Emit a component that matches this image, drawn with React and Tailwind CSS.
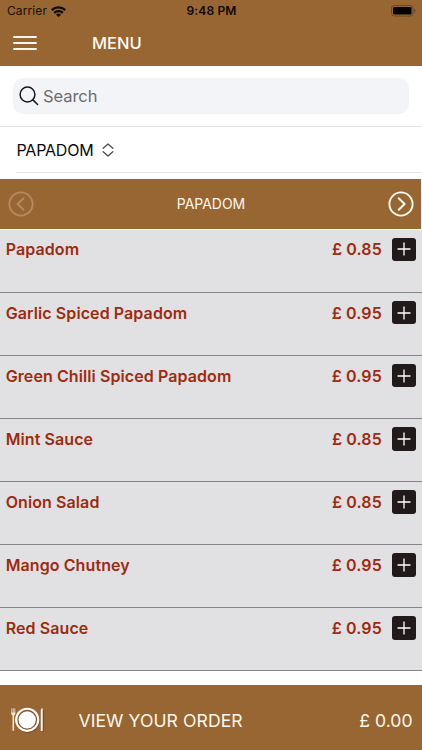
import React from 'react';

const menuItems = [
  { name: 'Papadom', price: '0.85' },
  { name: 'Garlic Spiced Papadom', price: '0.95' },
  { name: 'Green Chilli Spiced Papadom', price: '0.95' },
  { name: 'Mint Sauce', price: '0.85' },
  { name: 'Onion Salad', price: '0.85' },
  { name: 'Mango Chutney', price: '0.95' },
  { name: 'Red Sauce', price: '0.95' },
];

const WifiIcon = () => (
  <svg className="w-[15px] h-[11px]" viewBox="0 0 15 11" fill="none" stroke="#0d0805" strokeWidth="2.3">
    <path d="M0.8 4.1a9.5 9.5 0 0 1 13.4 0" />
    <path d="M3.2 6.9a6.1 6.1 0 0 1 8.6 0" />
    <path d="M7.5 11 5 8.6a3.6 3.6 0 0 1 5 0z" fill="#0d0805" stroke="none" />
  </svg>
);

const BatteryIcon = () => (
  <svg className="w-[25px] h-[12px]" viewBox="0 0 25 12" fill="none">
    <rect x="0.5" y="0.5" width="21.5" height="10.6" rx="2.8" stroke="#6b4824" />
    <rect x="2" y="2" width="18.5" height="7.6" rx="1.4" fill="#000" />
    <path d="M23.3 4v3.6c.8-.3 1.2-1 1.2-1.8s-.4-1.5-1.2-1.8z" fill="#5f3f20" />
  </svg>
);

const CircleArrow = ({ direction, className }) => (
  <svg className={`w-[26px] h-[26px] ${className}`} viewBox="0 0 26 26" fill="none" stroke="currentColor" strokeLinecap="round" strokeLinejoin="round">
    <circle cx="13" cy="13" r="11.6" strokeWidth="1.9" />
    <path d={direction === 'left' ? 'M15.5 7.2 9.6 13l5.9 5.8' : 'M10.7 7.2l5.9 5.8-5.9 5.8'} strokeWidth="2" />
  </svg>
);

const PlateIcon = () => (
  <svg className="w-[34px] h-[26px]" viewBox="0 0 34 26" fill="none">
    {/* Fork */}
    <path d="M1.8 1.3v5M3.3 1.3v5M4.8 1.3v5" stroke="#dccbb9" strokeWidth="1" />
    <path d="M1.3 5.500h4v1.800l-1.200 1.500v15H2.500v-15L1.300 7.300z" fill="#efe5da" />
    {/* Knife */}
    <path d="M32.300 24.500V2.500c.9 0 1.300.6 1.300 1.500v20.500z" fill="#64401e" />
    <path d="M30.800 24V4c0-1.700.5-2.700 1.900-2.700V24z" fill="#fff" />
    <circle cx="17.700" cy="13.800" r="11.900" fill="#6e4722" />
    <circle cx="17.200" cy="12.800" r="12.100" fill="#fff" />
    <circle cx="17.200" cy="12.800" r="9.300" stroke="#80572d" strokeWidth="1.300" />
  </svg>
);

const MenuRow = ({ item }) => (
  <li className="h-[63.150px] flex items-start justify-between pt-[6.900px] pl-[5.700px] pr-[6.200px] bg-[#e1e1e3] border-b border-[#858588]">
    <span className="text-[16px] leading-[26px] tracking-[0.090px] font-semibold text-[#9e2b10] whitespace-nowrap">{item.name}</span>
    <div className="flex items-center gap-[10.500px]">
      <span className="text-[16px] leading-[26px] tracking-[0.090px] font-semibold text-[#9e2b10] whitespace-nowrap">£ {item.price}</span>
      <button className="w-[23.500px] h-[23.500px] rounded-[3px] bg-[#211a1b] flex items-center justify-center" aria-label="Add">
        <svg className="w-[14px] h-[14px]" viewBox="0 0 14 14" stroke="#fff" strokeWidth="1.3">
          <path d="M7 .5v13M.5 7h13" />
        </svg>
      </button>
    </div>
  </li>
);

const App = () => {
  return (
    <div className="w-[422px] h-[750px] overflow-hidden flex flex-col bg-white font-['Inter','Liberation_Sans',sans-serif]">
      <header className="h-[65.500px] shrink-0 bg-[#986633]">
        <div className="h-[22px] grid grid-cols-3 items-center pl-[7px] pr-[6px]">
          <div className="flex items-center gap-[4px]">
            <span className="text-[12px] leading-none tracking-[0.100px] text-[#1a1008]">Carrier</span>
            <WifiIcon />
          </div>
          <span className="text-center text-[12px] leading-none font-semibold tracking-[0.150px] text-[#0d0805] whitespace-nowrap">9:48 PM</span>
          <div className="flex justify-end">
            <BatteryIcon />
          </div>
        </div>
        <div className="h-[42px] flex items-center pl-[13px]">
          <button className="w-6 flex flex-col gap-[4px]" aria-label="Open menu">
            <span className="h-[2px] rounded-full bg-[#fdf6ee]" />
            <span className="h-[2px] rounded-full bg-[#fdf6ee]" />
            <span className="h-[2px] rounded-full bg-[#fdf6ee]" />
          </button>
          <h1 className="ml-[55px] text-[16.500px] leading-none font-medium text-[#fffaf2]">MENU</h1>
        </div>
      </header>

      <div className="h-[61.500px] shrink-0 pt-[12.500px] px-[13px] border-b border-[#e6e6e8]">
        <div className="h-9 rounded-[10px] bg-[#f3f4f8] flex items-center pl-[6px] gap-[4px]">
          <svg className="w-5 h-5" viewBox="0 0 20 20" fill="none" stroke="#17171a" strokeWidth="1.5" strokeLinecap="round">
            <circle cx="8.5" cy="8.5" r="7.4" />
            <path d="m13.9 13.9 4.700 4.600" />
          </svg>
          <span className="text-[16.500px] leading-none tracking-[-0.050px] text-[#6c6c70]">Search</span>
        </div>
      </div>

      <div className="h-[45.500px] shrink-0 ml-4 pl-[0.500px] pt-[1.500px] flex items-center gap-[8px] border-b border-[#e9e9ec]">
        <span className="text-[16px] leading-none tracking-[-0.200px] text-[#0b0b0b]">PAPADOM</span>
        <svg className="w-3 h-[14px]" viewBox="0 0 12 14" fill="none" stroke="#4b4b4e" strokeWidth="1.3" strokeLinecap="round" strokeLinejoin="round">
          <path d="M1.200 5.200 6 1l4.800 4.200M1.200 8.800 6 13l4.800-4.200" />
        </svg>
      </div>

      <div className="mt-[6.500px] w-[420.500px] h-[49.500px] shrink-0 flex items-center justify-between pl-[7.500px] pr-[6px] bg-[#986633]">
        <CircleArrow direction="left" className="text-[#b58a60]" />
        <span className="text-[14px] leading-none tracking-[-0.020px] text-[#fff6ea]">PAPADOM</span>
        <CircleArrow direction="right" className="text-[#fffaf0]" />
      </div>

      <ul className="mt-[1px] shrink-0">
        {menuItems.map((item) => (
          <MenuRow key={item.name} item={item} />
        ))}
      </ul>

      <footer className="mt-auto h-[65px] shrink-0 flex items-center pl-[10px] pr-[9.500px] pt-[6px] bg-[#986633]">
        <div className="pb-[2px]">
          <PlateIcon />
        </div>
        <span className="ml-[34.500px] text-[17.600px] leading-none tracking-[0.060px] text-[#fff8ec]">VIEW YOUR ORDER</span>
        <span className="ml-auto text-[17.600px] leading-none text-[#fff8ec]">£ 0.00</span>
      </footer>
    </div>
  );
};

export default App;
